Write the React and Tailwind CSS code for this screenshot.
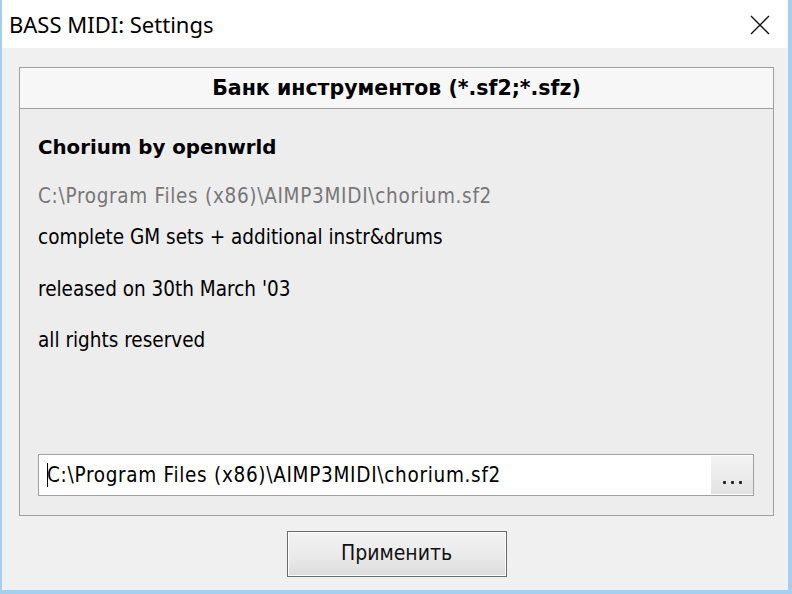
const tahoma = { fontFamily: '"DejaVu Sans Condensed", "DejaVu Sans", sans-serif' };
const tahomaBold = { fontFamily: '"DejaVu Sans", sans-serif' };

export default function App() {
  return (
    <div
      className="w-[792px] h-[594px] flex flex-col bg-[#f0f0f0] border-l-2 border-r-4 border-b-4 border-[#a6cfee] overflow-hidden text-black"
      style={tahoma}
    >
      {/* title bar */}
      <div className="h-[48px] shrink-0 bg-white flex items-center justify-between pl-[7px] pr-[18px]">
        <span className="text-[22px] leading-none" style={{ fontFamily: '"Noto Sans", sans-serif' }}>
          BASS MIDI: Settings
        </span>
        <svg width="20" height="20" viewBox="0 0 20 20" className="mt-px">
          <path d="M1 1 L19 19 M19 1 L1 19" stroke="#111" strokeWidth="1.4" fill="none" />
        </svg>
      </div>

      <div className="flex-1 flex flex-col pt-[19px] pl-[17px] pr-[14px]">
        {/* group panel */}
        <div className="h-[449px] shrink-0 border border-[#a0a0a0] flex flex-col bg-[#ededed]">
          <div
            className="h-[41px] shrink-0 border-b border-[#a0a0a0] bg-[#f7f7f7] flex items-center justify-center font-bold text-[20.5px]"
            style={tahomaBold}
          >
            Банк инструментов (*.sf2;*.sfz)
          </div>
          <div className="flex-1 flex flex-col pl-[18px] pr-[19px] pb-[19px] text-[20.5px]">
            <div className="mt-[27px] h-[24px] leading-[24px] font-bold text-[19.8px]" style={tahomaBold}>
              Chorium by openwrld
            </div>
            <div className="mt-[24px] h-[24px] leading-[24px] text-[#777] tracking-[0.7px]">
              C:\Program Files (x86)\AIMP3MIDI\chorium.sf2
            </div>
            <div className="mt-[17px] h-[24px] leading-[24px]">complete GM sets + additional instr&amp;drums</div>
            <div className="mt-[28px] h-[24px] leading-[24px]">released on 30th March '03</div>
            <div className="mt-[27px] h-[24px] leading-[24px]">all rights reserved</div>

            {/* path box */}
            <div className="mt-auto h-[42px] border border-[#a0a0a0] bg-white flex items-stretch">
              <div className="relative flex-1 flex items-center pl-[8px]">
                <span className="absolute left-[8px] top-[8px] w-px h-[24px] bg-black" />
                <span className="tracking-[0.7px]">C:\Program Files (x86)\AIMP3MIDI\chorium.sf2</span>
              </div>
              <div className="w-[42px] my-px bg-gradient-to-b from-[#f4f4f4] to-[#e2e2e2] flex items-end justify-center pb-[10px] gap-[5px]">
                <span className="w-[3px] h-[3px] bg-[#333]" />
                <span className="w-[3px] h-[3px] bg-[#333]" />
                <span className="w-[3px] h-[3px] bg-[#333]" />
              </div>
            </div>
          </div>
        </div>

        {/* apply */}
        <div className="flex justify-center mt-[15px]">
          <button className="w-[220px] h-[46px] border border-[#6b6b6b] shadow-[inset_0_0_0_1px_#fcfcfc] bg-gradient-to-b from-[#f2f2f2] via-[#ebebeb] to-[#dcdcdc] text-[21px] text-[#111]">
            Применить
          </button>
        </div>
      </div>
    </div>
  );
}
